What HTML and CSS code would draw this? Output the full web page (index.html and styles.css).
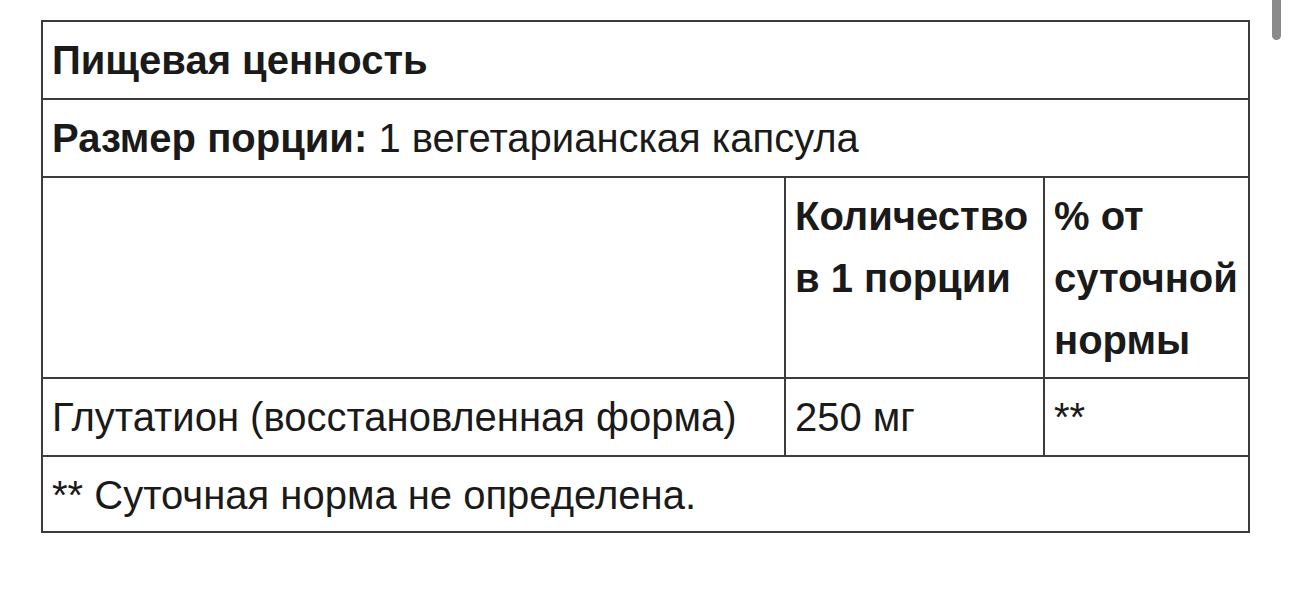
FILE: index.html
```html
<!DOCTYPE html>
<html lang="ru">
<head>
<meta charset="utf-8">
<link rel="stylesheet" href="styles.css">
</head>
<body>
<div class="page">
  <table class="facts">
    <colgroup>
      <col class="c1"><col class="c2"><col class="c3">
    </colgroup>
    <tr><td colspan="3" class="b">Пищевая ценность</td></tr>
    <tr><td colspan="3"><span class="b">Размер порции:</span> 1 вегетарианская капсула</td></tr>
    <tr class="head">
      <td></td>
      <td class="b">Количество в&nbsp;1&nbsp;порции</td>
      <td class="b">% от суточной нормы</td>
    </tr>
    <tr>
      <td>Глутатион (восстановленная форма)</td>
      <td>250 мг</td>
      <td>**</td>
    </tr>
    <tr><td colspan="3" class="foot">** Суточная норма не определена.</td></tr>
  </table>
</div>
<div class="scrollbar"></div>
</body>
</html>
```

FILE: styles.css
```css
html, body {
  margin: 0;
  padding: 0;
  background: #fff;
}
body {
  font-family: "Liberation Sans", Arial, sans-serif;
  color: #1a1a1a;
  font-size: 40px;
  overflow: hidden;
}
.page {
  padding: 20px 41px 0 41px;
  width: 1207px;
}
.facts {
  border-collapse: collapse;
  width: 1207px;
  table-layout: fixed;
}
.c1 { width: 743px; }
.c2 { width: 259px; }
.c3 { width: 205px; }
.facts td {
  border: 2px solid #3c3c3c;
  padding: 7px 8px 7px 9px;
  line-height: 62px;
  vertical-align: top;
}
.facts .head td {
  padding-bottom: 6px;
}
.facts td.foot {
  padding-bottom: 5px;
}
.b { font-weight: 700; }
.scrollbar {
  position: fixed;
  top: 0;
  left: 1272px;
  width: 9px;
  height: 40px;
  background: #8a8a8a;
  border-radius: 0 0 5px 5px;
}
```
